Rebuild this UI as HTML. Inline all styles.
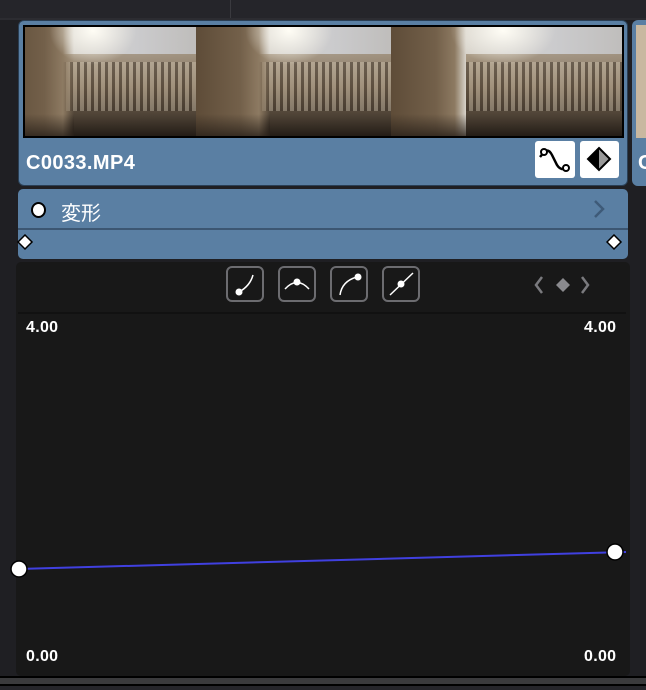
<!DOCTYPE html>
<html><head><meta charset="utf-8"><style>
*{margin:0;padding:0;box-sizing:border-box}
body{width:646px;height:690px;background:#1f1f23;position:relative;overflow:hidden;font-family:"Liberation Sans","Noto Sans CJK JP",sans-serif}
.abs{position:absolute}
.frame{position:absolute;top:0;height:100%;width:196px;overflow:hidden;
background:linear-gradient(90deg,#cfc4b0 0%,#d8d3ca 30%,#cbcbcd 70%,#bfbdbb 100%);}
.ship{position:absolute;left:32%;top:25%;width:68%;height:75%;
background:linear-gradient(180deg,rgba(140,118,88,.6) 0%,rgba(120,100,76,.9) 40%,rgba(70,58,45,.95) 75%,rgba(35,28,22,1) 100%)}
.ship::after{content:"";position:absolute;left:0;top:10%;width:100%;height:60%;background:repeating-linear-gradient(90deg,rgba(60,50,40,.5) 0 3px,rgba(220,210,190,.35) 3px 7px)}
.pillar{position:absolute;left:0;top:0;width:38%;height:100%;background:linear-gradient(90deg,#5e4c38 0%,#73604a 60%,#8d7a62 85%,rgba(160,145,120,0) 100%)}
.pillar::after{content:"";position:absolute;left:0;bottom:0;width:100%;height:20%;background:linear-gradient(180deg,rgba(40,32,25,0),rgba(40,32,25,.8))}
.glow{position:absolute;left:25%;top:-10%;width:45%;height:45%;background:radial-gradient(ellipse at 50% 30%,rgba(255,253,245,1),rgba(255,250,235,0) 70%)}
.btn{position:absolute;width:38px;height:36px;border:2px solid #6c6c70;border-radius:6px;top:266px}
.num{position:absolute;color:#fff;font-size:16px;font-weight:bold;letter-spacing:.3px}
</style></head><body>
<div class="abs" style="left:0;top:0;width:646px;height:18px;background:#25252a"></div>
<div class="abs" style="left:230px;top:0;width:1px;height:18px;background:#3a3a3f"></div>
<div class="abs" style="left:0;top:18px;width:646px;height:2px;background:#2c2c31"></div>
<div class="abs" style="left:18px;top:20px;width:610px;height:166px;background:#5a7fa3;border-radius:6px;border:1px solid #2a3f55"></div>
<div class="abs" style="left:23px;top:25px;width:601px;height:113px;background:#000;overflow:hidden">
 <div class="abs" style="left:2px;top:2px;width:597px;height:109px;overflow:hidden">
  <div class="frame" style="left:-25px"><div class="ship"></div><div class="pillar"></div><div class="glow"></div></div>
  <div class="frame" style="left:171px"><div class="ship"></div><div class="pillar"></div><div class="glow"></div></div>
  <div class="frame" style="left:366px;width:235px"><div class="ship"></div><div class="pillar" style="width:32%"></div><div class="glow"></div></div>
 </div>
</div>
<div class="abs" style="left:632px;top:20px;width:20px;height:166px;background:#5a7fa3;border-radius:6px"></div>
<div class="abs" style="left:636px;top:25px;width:12px;height:113px;background:#c9b8a0"></div>
<div class="abs" style="left:26px;top:152px;color:#fff;font-size:20px;font-weight:bold;letter-spacing:.4px">C0033.MP4</div>
<div class="abs" style="left:638px;top:152px;color:#fff;font-size:20px;font-weight:bold">C</div>
<div class="abs" style="left:535px;top:141px;width:40px;height:37px;background:#fff;border-radius:3px">
<svg width="40" height="37"><path d="M5 16 L10 10 Q14 8 17 14 L22 24 Q25 29 30 28" fill="none" stroke="#000" stroke-width="2.5"/><circle cx="9" cy="11" r="3" fill="#fff" stroke="#000" stroke-width="2"/><circle cx="31" cy="27" r="3" fill="#fff" stroke="#000" stroke-width="2"/></svg></div>
<div class="abs" style="left:580px;top:141px;width:39px;height:37px;background:#fff;border-radius:3px">
<svg width="39" height="37"><path d="M19 7 L30 18 L19 29 L8 18 Z" fill="#999" stroke="#000" stroke-width="2"/><path d="M19 7 L8 18 L19 29 Z" fill="#000"/></svg></div>
<div class="abs" style="left:18px;top:189px;width:610px;height:70px;background:#5a7fa3;border-radius:5px"></div>
<div class="abs" style="left:18px;top:228px;width:610px;height:2px;background:#3c5672"></div>
<div class="abs" style="left:31px;top:202px;width:15px;height:16px;border-radius:50%;background:#fff;border:2px solid #000"></div>
<div class="abs" style="left:61px;top:197px;color:#fff;font-size:20px">変形</div>
<svg class="abs" style="left:592px;top:199px" width="14" height="20"><path d="M3 2 L11 10 L3 18" fill="none" stroke="#3e5a78" stroke-width="2.5"/></svg>
<svg class="abs" style="left:17px;top:234px" width="18" height="18"><path d="M8 1 L15 8 L8 15 L1 8Z" fill="#fff" stroke="#000" stroke-width="1.5"/></svg>
<svg class="abs" style="left:606px;top:234px" width="18" height="18"><path d="M8 1 L15 8 L8 15 L1 8Z" fill="#fff" stroke="#000" stroke-width="1.5"/></svg>
<div class="abs" style="left:16px;top:262px;width:614px;height:414px;background:#181818;border-radius:5px"></div>
<div class="abs" style="left:18px;top:312px;width:608px;height:2px;background:#111"></div>
<div class="btn" style="left:226px"><svg width="34" height="32"><path d="M11 24 Q22 18 25 7" fill="none" stroke="#fff" stroke-width="1.5"/><circle cx="11" cy="24" r="3.5" fill="#fff"/></svg></div>
<div class="btn" style="left:278px"><svg width="34" height="32"><path d="M5 21 Q17 8 29 21" fill="none" stroke="#fff" stroke-width="1.5"/><circle cx="17" cy="14" r="3.5" fill="#fff"/></svg></div>
<div class="btn" style="left:330px"><svg width="34" height="32"><path d="M8 27 Q10 13 25 9" fill="none" stroke="#fff" stroke-width="1.5"/><circle cx="26" cy="9" r="3.5" fill="#fff"/></svg></div>
<div class="btn" style="left:382px"><svg width="34" height="32"><path d="M6 27 L29 5" stroke="#fff" stroke-width="1.5"/><circle cx="17" cy="16" r="3.5" fill="#fff"/></svg></div>
<svg class="abs" style="left:532px;top:274px" width="62" height="22"><path d="M10 3 L4 11 L10 19" fill="none" stroke="#7a7a7e" stroke-width="2.5"/><path d="M31 4 L38 11 L31 18 L24 11Z" fill="#8a8a8e"/><path d="M50 3 L56 11 L50 19" fill="none" stroke="#7a7a7e" stroke-width="2.5"/></svg>
<div class="num" style="left:26px;top:319px">4.00</div>
<div class="num" style="left:584px;top:319px">4.00</div>
<div class="num" style="left:26px;top:648px">0.00</div>
<div class="num" style="left:584px;top:648px">0.00</div>
<svg class="abs" style="left:0;top:530px" width="646" height="60"><line x1="18" y1="39" x2="626" y2="22" stroke="#4040e0" stroke-width="2"/><ellipse cx="19" cy="39" rx="8" ry="8" fill="#fff" stroke="#000" stroke-width="1.5"/><ellipse cx="615" cy="22" rx="8" ry="8" fill="#fff" stroke="#000" stroke-width="1.5"/></svg>
<div class="abs" style="left:0;top:676px;width:646px;height:2px;background:#000"></div>
<div class="abs" style="left:0;top:678px;width:646px;height:6px;background:#3a3a3c"></div>
<div class="abs" style="left:0;top:684px;width:646px;height:2px;background:#000"></div>
<div class="abs" style="left:0;top:686px;width:646px;height:4px;background:#25252a"></div>
</body></html>
